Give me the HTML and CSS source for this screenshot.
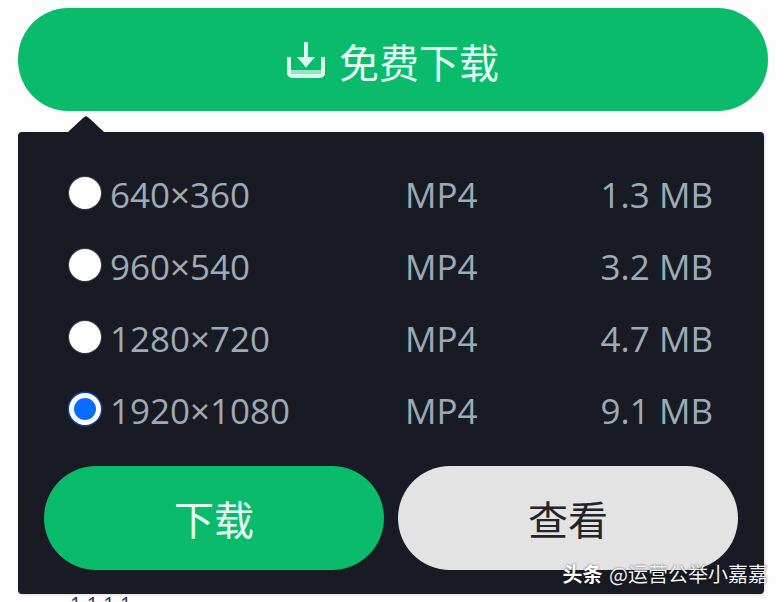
FILE: index.html
```html
<!DOCTYPE html>
<html lang="zh">
<head>
<meta charset="utf-8">
<title>免费下载</title>
<link rel="stylesheet" href="styles.css">
</head>
<body>
<div class="page">
  <button class="main-btn" type="button">
    <svg class="dl-icon" viewBox="0 0 38 40" width="38" height="40" aria-hidden="true">
      <path class="dl-tray" d="M2 30h34v4a3 3 0 0 1-3 3H5a3 3 0 0 1-3-3z"/>
      <path class="dl-stroke" d="M2 17V33a3 3 0 0 0 3 3h28a3 3 0 0 0 3-3V17"/>
      <path class="dl-stroke" d="M19 2V18"/>
      <path class="dl-head" d="M10 17h18L19 27.500z"/>
    </svg>
    <span>免费下载</span>
  </button>
  <div class="panel">
    <div class="arrow"></div>
    <div class="rows">
      <div class="row"><span class="radio"></span><span class="res">640×360</span><span class="fmt">MP4</span><span class="size">1.3 MB</span></div>
      <div class="row"><span class="radio"></span><span class="res">960×540</span><span class="fmt">MP4</span><span class="size">3.2 MB</span></div>
      <div class="row"><span class="radio"></span><span class="res">1280×720</span><span class="fmt">MP4</span><span class="size">4.7 MB</span></div>
      <div class="row"><span class="radio checked"></span><span class="res">1920×1080</span><span class="fmt">MP4</span><span class="size">9.1 MB</span></div>
    </div>
    <div class="actions">
      <button class="btn green" type="button">下载</button>
      <button class="btn grey" type="button">查看</button>
    </div>
    <div class="watermark"><b>头条</b> @运营公举小嘉嘉</div>
  </div>
  <div class="sliver">1 1 1 1</div>
</div>
</body>
</html>
```
FILE: styles.css
```css
* { box-sizing: border-box; }
html, body { margin: 0; height: 100%; }
body {
  background: #fdfdfe;
  overflow: hidden;
  font-family: "Open Sans", "Noto Sans CJK SC", sans-serif;
}
.page { padding: 8px 16px 0 18px; height: 602px; overflow: hidden; }
button { border: 0; padding: 0; font-family: "Noto Sans CJK SC", sans-serif; font-weight: 400; }

.main-btn {
  width: 750px;
  height: 103px;
  border-radius: 50px / 51px;
  background: #0abb6b;
  color: #e6fff4;
  font-size: 40px;
  display: flex;
  align-items: center;
  justify-content: center;
  gap: 14px;
}
.main-btn span { line-height: 1; margin-top: 2px; }
.dl-icon { margin-top: 1px; }
.dl-stroke { fill: none; stroke: #dcfbee; stroke-width: 4; }
.dl-tray { fill: #8fe6c0; }
.dl-head { fill: #dcfbee; }

.panel {
  position: relative;
  width: 746px;
  height: 462px;
  margin-top: 21px;
  padding: 26px 26px 0;
  background: #191b24;
  border-radius: 4px;
  box-shadow: 1px 1px 3px rgba(0, 0, 0, 0.12);
}
.arrow {
  position: absolute;
  left: 50px;
  top: -16px;
  width: 36px;
  height: 16px;
  background: #191b24;
  clip-path: polygon(0 100%, 15px 2px, 18px 0, 21px 2px, 100% 100%);
}
.rows { display: flex; flex-direction: column; padding: 0 0 0 24px; }
.row {
  display: grid;
  grid-template-columns: 42px 295px 131px 1fr;
  align-items: center;
  height: 72px;
  width: 645px;
  font-size: 35px;
  color: #9dabb6;
}
.radio {
  width: 32px;
  height: 32px;
  margin: -2px 0 0 1px;
  border-radius: 50%;
  background: #fff;
  box-shadow: 0 0 0 1px #3b3c42;
}
.radio.checked {
  border: 5px solid #fff;
  background: #0a6cff;
  box-shadow: 0 0 0 1.500px #0f3f9c;
}
.size { text-align: right; }

.actions { display: flex; gap: 14px; margin-top: 20px; }
.btn {
  width: 340px;
  height: 104px;
  border-radius: 52px;
  font-size: 40px;
}
.btn.green { background: #0abb6b; color: #e6fff4; }
.btn.grey { background: #e3e3e4; color: #23242a; }

.watermark {
  position: absolute;
  right: -4px;
  top: 429px;
  font-family: "Noto Sans CJK SC", sans-serif;
  font-size: 20px;
  line-height: 26px;
  word-spacing: 2px;
  color: #f2f2f2;
  white-space: nowrap;
  text-shadow: 0 0 2px rgba(0, 0, 0, 0.7);
}
.watermark b { font-weight: 700; color: #fff; }

.sliver {
  margin: 0 0 0 52px;
  font-size: 20px;
  line-height: 20px;
  color: #333;
  height: 8px;
}
```
